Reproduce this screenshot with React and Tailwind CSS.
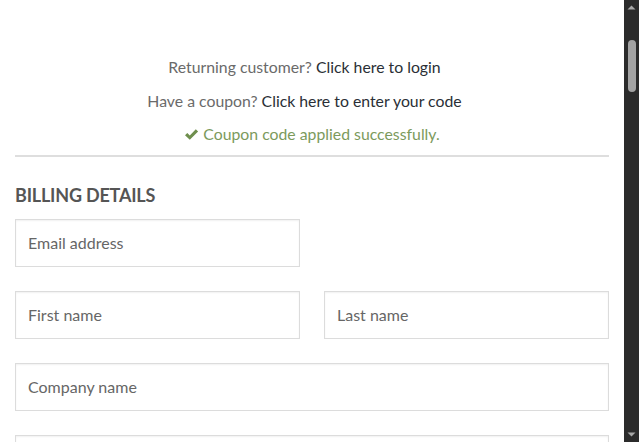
import React from "react";

function Field({ placeholder }) {
  return (
    <div className="h-[48px] border border-[#dcdcdc] bg-white flex items-center px-[12px] text-[16px] text-[#666] shadow-[inset_0_1px_2px_rgba(0,0,0,0.06)]">
      {placeholder}
    </div>
  );
}

export default function App() {
  return (
    <div className="flex h-[442px] w-[639px] overflow-hidden bg-white" style={{ fontFamily: "Lato, 'Open Sans', sans-serif" }}>
      <div className="flex-1 px-[15px] pt-[57px]">
        <div className="flex flex-col items-center text-[15.8px] leading-[20px] gap-[13.5px] text-[#6a6a6a]">
          <p className="pr-[15px]">
            Returning customer? <span className="text-[#2a2f36]">Click here to login</span>
          </p>
          <p className="pr-[15px]">
            Have a coupon? <span className="text-[#2a2f36]">Click here to enter your code</span>
          </p>
          <p className="text-[#7c9a5c] flex items-center gap-[4px]">
            <svg width="15" height="13" viewBox="0 0 15 13" className="mt-[1px]">
              <path d="M1 7.2 L3.3 4.9 L5.8 7.4 L11.8 1.2 L14.1 3.5 L5.8 11.8 Z" fill="#6f8f4e" />
            </svg>
            Coupon code applied successfully.
          </p>
        </div>
        <div className="mt-[11px] h-[2px] bg-[#dedede]" />
        <h2 className="mt-[26px] text-[18px] leading-[24px] font-bold text-[#555] tracking-[-0.2px]">BILLING DETAILS</h2>
        <div className="mt-[12px] flex flex-col gap-[24px]">
          <div className="grid grid-cols-2 gap-[24px]">
            <Field placeholder="Email address" />
          </div>
          <div className="grid grid-cols-2 gap-[24px]">
            <Field placeholder="First name" />
            <Field placeholder="Last name" />
          </div>
          <Field placeholder="Company name" />
          <Field placeholder="" />
        </div>
      </div>
      <div className="w-[15px] bg-[#2b2b2b] flex flex-col items-center">
        <svg width="15" height="15" viewBox="0 0 15 15">
          <path d="M3.5 9.5 L7.5 5.5 L11.5 9.5 Z" fill="#a8a8a8" />
        </svg>
        <div className="mt-[25px] w-[8px] h-[52px] rounded-full bg-[#a3a3a3]" />
        <div className="flex-1" />
        <svg width="15" height="15" viewBox="0 0 15 15">
          <path d="M3.5 5.5 L7.5 9.5 L11.5 5.5 Z" fill="#a8a8a8" />
        </svg>
      </div>
    </div>
  );
}
